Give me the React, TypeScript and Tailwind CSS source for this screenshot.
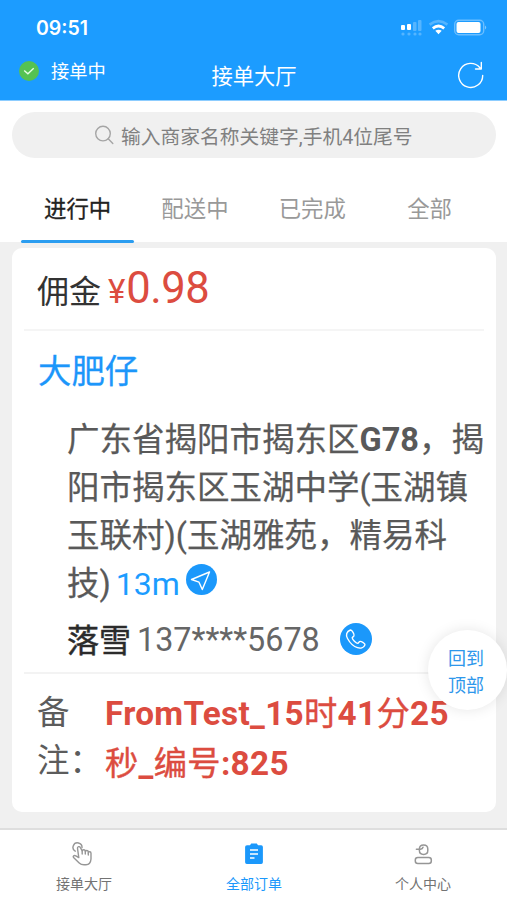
import type { ReactNode } from "react";

const addressLines: ReactNode[] = [
  <>广东省揭阳市揭东区<b className="font-bold [-webkit-text-stroke:0]">G78</b>，揭</>,
  <>阳市揭东区玉湖中学(玉湖镇</>,
  <>玉联村)(玉湖雅苑，精易科</>,
];

const tabs = ["进行中", "配送中", "已完成", "全部"];

function StatusIcons() {
  return (
    <svg width="90" height="20" viewBox="0 0 90 20" fill="#fff">
      <rect x="2" y="7" width="4" height="5" rx="1" />
      <rect x="8" y="6" width="4" height="6" rx="1" />
      <g opacity=".25">
        <rect x="14" y="4" width="3.5" height="9" rx="1" />
        <rect x="19" y="2" width="3.5" height="11" rx="1" />
        <circle cx="4" cy="16" r="1.6" />
        <circle cx="10" cy="16" r="1.6" />
        <circle cx="16" cy="16" r="1.6" />
        <circle cx="21" cy="16" r="1.6" />
      </g>
      <g fill="none" stroke="#fff">
        <path d="M30.6 6.6Q39.5-.2 48.4 6.6" strokeWidth="2.6" opacity=".25" />
        <path d="M33.8 10.3Q39.5 5.8 45.2 10.3" strokeWidth="2.8" />
      </g>
      <path d="M36.3 12.8Q39.5 10.8 42.7 12.8L39.5 16.2Z" />
      <rect x="55.7" y="2.2" width="29" height="14.6" rx="4" fill="none" stroke="#fff" strokeWidth="1.4" opacity=".35" />
      <rect x="57.5" y="4" width="24" height="11" rx="2" />
      <path d="M86.2 7.5q2 2 0 4z" opacity=".55" />
    </svg>
  );
}

function TapIcon() {
  return (
    <svg className="-ml-1" width="24" height="24" viewBox="0 0 24 24" fill="none" stroke="#969696" strokeWidth="1.4" strokeLinecap="round" strokeLinejoin="round">
      <path d="M5.2 9.2A4.5 4.5 0 1 1 12 5.6" />
      <path d="M8.8 15.6 5.8 13.8C3.9 12.8 2.3 14.4 3.8 15.8L9.2 21Q11 22.8 14 22.8H16C19.7 22.8 20.8 19.4 21 17V11.3C21 9.4 18.4 9.3 18.3 11V9.8C18.2 8 15.4 8.1 15.3 9.6V9C15.2 7.3 12.3 7.3 12.2 8.9L10.4 5.6C9.6 3.9 7.2 4.6 7.5 6.4L8.8 15.6" />
      <path d="M12.2 8.9V12M15.3 9.6V12M18.3 11V13" />
    </svg>
  );
}

function OrdersIcon() {
  return (
    <svg width="20" height="22" viewBox="0 0 20 22">
      <path d="M3 2.2H6L7.2.6H12.8L14 2.2H17.2Q18.9 2.2 18.9 4V19.3Q18.9 21 17.2 21H2.8Q1.1 21 1.1 19.3V4Q1.1 2.2 3 2.2Z" fill="#1b98fb" />
      <path d="M6 7H14M6 11H14M6 15H10.5" stroke="#fff" strokeWidth="1.5" />
    </svg>
  );
}

function ProfileIcon() {
  return (
    <svg width="20" height="22" viewBox="0 0 20 22" fill="none" stroke="#969696" strokeWidth="1.5" strokeLinecap="round" strokeLinejoin="round">
      <path d="M6.4 6V7.5C6.4 12.7 14.8 12.7 14.8 7.5V6C14.8 .6 6.4 .6 6.4 6ZM3.4 6.2H7.5Q9.5 6.2 10 4.3" />
      <rect x="2.3" y="14.6" width="16" height="6" rx="2.5" />
    </svg>
  );
}

export default function App() {
  return (
    <div className="relative flex h-[900px] w-[507px] flex-col overflow-hidden bg-[#f0f0f0] font-[Roboto,'Noto_Sans_CJK_SC',sans-serif]">
      <header className="h-[101px] shrink-0 border-b border-[#8dcdff] bg-[#1c9cff] text-white">
        <div className="flex h-14 items-center justify-between pl-9 pr-[18px]">
          <span className="font-[Inter,sans-serif] text-[19.5px] font-semibold leading-5">09:51</span>
          <StatusIcons />
        </div>
        <div className="grid grid-cols-3 pl-[19px] pr-[22px]">
          <div className="flex h-[29px] items-center">
            <svg width="20" height="20" viewBox="0 0 20 20" className="shrink-0">
              <circle cx="10" cy="10" r="10" fill="#55c252" />
              <path d="m5.2 9.5 3.7 3.2 5.8-5.4" fill="none" stroke="#e7ffe5" strokeWidth="1.4" />
            </svg>
            <span className="ml-3 pt-0.5 text-[18.3px] leading-7">接单中</span>
          </div>
          <h1 className="h-10 whitespace-nowrap pl-1 pt-px text-center text-[21.3px] leading-10">接单大厅</h1>
          <div className="flex h-10 items-center justify-end">
            <svg className="-mt-0.5" width="28" height="28" viewBox="0 0 28 28" fill="none" stroke="#fff" strokeWidth="1.4" strokeLinecap="round" strokeLinejoin="round">
              <path d="M25.7 14.4A12 12 0 1 1 22.9 6.7M24.3 1.5V8H18.5" />
            </svg>
          </div>
        </div>
      </header>

      <section className="h-[141px] shrink-0 bg-white px-[11px] pt-[11px]">
        <div className="ml-px flex h-[46px] w-[484px] items-center rounded-full bg-[#f0f0f0] pl-[82px] text-[#808080]">
          <svg width="21" height="21" viewBox="0 0 21 21" fill="none" stroke="#a5a5a5" strokeWidth="1.4" strokeLinecap="round">
            <circle cx="9" cy="8.6" r="7.3" />
            <path d="m14.2 13.8 4.6 4.6" />
          </svg>
          <span className="ml-1.5 whitespace-nowrap pt-1.5 text-[19.75px] leading-8">输入商家名称关键字,手机4位尾号</span>
        </div>
        <nav className="mt-7 flex pl-2">
          {tabs.map((tab, i) => (
            <div key={tab} className="flex h-[58px] w-[117.3px] flex-col items-center">
              <span className={i === 0 ? "h-11 text-[22.4px] leading-[46px] text-[#222] [-webkit-text-stroke:0.3px_#222]" : "h-11 text-[22.4px] leading-[46px] text-[#999]"}>{tab}</span>
              {i === 0 && <i className="mt-[10px] h-[3px] w-[113px] shrink-0 rounded-full bg-[#2b9df0]" />}
            </div>
          ))}
        </nav>
      </section>

      <main className="mx-3 mt-1.5 h-[564px] w-[484px] shrink-0 rounded-[10px] bg-white px-3">
        <div className="flex h-[83px] items-baseline border-b-2 border-[#f5f5f5] pl-[13px] leading-[82px]">
          <span className="text-[32px] text-[#333]">佣金</span>
          <span className="ml-[7px] text-[33px] text-[#dc4c40]">¥</span>
          <span className="ml-px text-[43.5px] tracking-[-0.5px] text-[#dc4c40]">0.98</span>
        </div>

        <div className="h-[343px] border-b-2 border-[#f3f3f3] pl-3.5">
          <h2 className="h-[84px] text-[33.4px] leading-[82px] text-[#1c96fa] [-webkit-text-stroke:0.3px_#1c96fa]">大肥仔</h2>
          <div className="pl-[29px] text-[32.5px] leading-[50px] text-[#595959]">
            {addressLines.map((line, i) => (
              <p key={i} className="h-12 whitespace-nowrap [-webkit-text-stroke:0.25px_#595959]">{line}</p>
            ))}
            <div className="flex h-12 items-center">
              <span className="pt-0.5 [-webkit-text-stroke:0.25px_#595959]">技)</span>
              <span className="ml-[5px] pt-0.5 text-[32px] text-[#1c9cff]">13m</span>
              <svg className="-mt-2 ml-1.5" width="31" height="31" viewBox="0 0 31 31">
                <circle cx="15.5" cy="15.5" r="15.5" fill="#1b98fb" />
                <path d="M23.5 8 5.5 15.5 13 18.2 16.3 25.5Z" fill="none" stroke="#fff" strokeWidth="1.4" strokeLinejoin="round" />
              </svg>
            </div>
          </div>
          <div className="mt-[3px] flex h-[60px] items-center pl-[29px] text-[32px] leading-[60px]">
            <span className="pt-px text-[#2b2b2b] [-webkit-text-stroke:0.5px_#2b2b2b]">落雪</span>
            <span className="ml-1.5 text-[32.3px] text-[#666]">137****5678</span>
            <svg className="-mt-0.5 ml-5" width="32" height="32" viewBox="0 0 32 32">
              <circle cx="16" cy="16" r="16" fill="#1b98fb" />
              <path d="M10.5 7C6.5 8.5 5.5 12 7.5 15.5C10 20 13.5 23.5 17.5 24.7C21 25.8 24 24.3 25 21.8C25.3 20.6 20.8 17.8 19.6 18.6L17.8 20.4C16.2 20.4 12.2 16.3 12.2 14.8L14 12.7C14.6 11.7 12 6.7 10.5 7Z" fill="none" stroke="#fff" strokeWidth="1.4" strokeLinejoin="round" />
            </svg>
          </div>
        </div>

        <div className="flex pl-[13px] pt-[15px] text-[32.5px]">
          <div className="w-[68px] shrink-0 leading-[48px] text-[#5c5c5c]">
            <p>备</p>
            <p>注：</p>
          </div>
          <div className="whitespace-nowrap text-[33.3px] font-bold leading-[50px] tracking-[0.3px] text-[#dc4c40]">
            <p>FromTest_15<span className="font-normal [-webkit-text-stroke:0.4px_#dc4c40]">时</span>41<span className="font-normal [-webkit-text-stroke:0.4px_#dc4c40]">分</span>25</p>
            <p><span className="font-normal [-webkit-text-stroke:0.4px_#dc4c40]">秒</span>_<span className="font-normal [-webkit-text-stroke:0.4px_#dc4c40]">编号</span>:825</p>
          </div>
        </div>
      </main>

      <footer className="mt-4 flex h-[72px] shrink-0 border-t-2 border-[#dedede] bg-white text-sm leading-5 text-[#737373]">
        <div className="flex flex-1 flex-col items-center pr-0.5 pt-3"><TapIcon /><span className="mt-2">接单大厅</span></div>
        <div className="flex flex-1 flex-col items-center pr-px pt-[13px] text-[#1b98fb]"><OrdersIcon /><span className="mt-[9px]">全部订单</span></div>
        <div className="flex flex-1 flex-col items-center pt-[13px]"><ProfileIcon /><span className="mt-[9px]">个人中心</span></div>
      </footer>

      <button className="absolute left-[428px] top-[630px] h-20 w-[79px] rounded-full bg-white pr-[3px] pt-[3px] text-[18px] leading-[27px] text-[#2e97eb] shadow-[0_0_14px_rgba(0,0,0,0.1)]">
        回到<br />顶部
      </button>
    </div>
  );
}
